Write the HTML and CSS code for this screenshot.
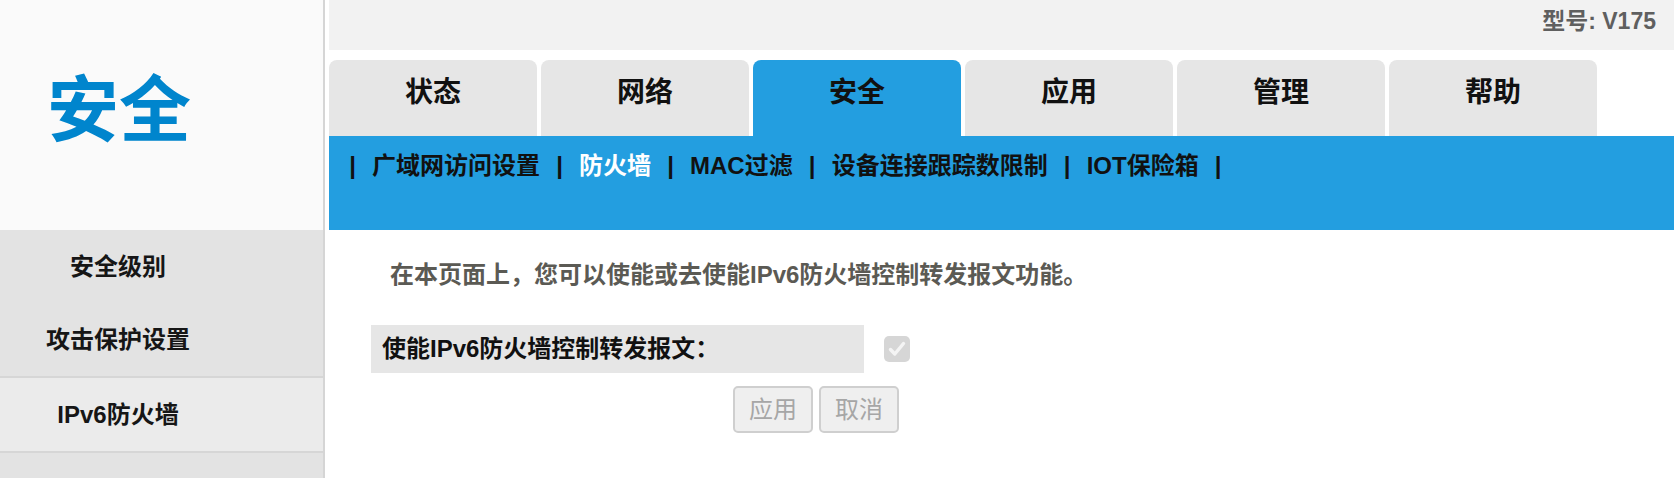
FILE: index.html
```html
<!DOCTYPE html>
<html lang="zh-CN">
<head>
<meta charset="utf-8">
<title>安全 - IPv6防火墙</title>
<link rel="stylesheet" href="styles.css">
</head>
<body>
<div class="page">
  <aside class="sidebar">
    <div class="side-title">安全</div>
    <ul class="side-menu">
      <li class="side-item">安全级别</li>
      <li class="side-item">攻击保护设置</li>
      <li class="side-item active">IPv6防火墙</li>
      <li class="side-item"></li>
    </ul>
  </aside>
  <main class="main">
    <div class="topbar">型号: V175</div>
    <nav class="tabs">
      <div class="tab">状态</div>
      <div class="tab">网络</div>
      <div class="tab active">安全</div>
      <div class="tab">应用</div>
      <div class="tab">管理</div>
      <div class="tab">帮助</div>
    </nav>
    <div class="subnav">
      <span class="pipe">|</span>
      <span class="sublink">广域网访问设置</span>
      <span class="pipe">|</span>
      <span class="sublink current">防火墙</span>
      <span class="pipe">|</span>
      <span class="sublink">MAC过滤</span>
      <span class="pipe">|</span>
      <span class="sublink">设备连接跟踪数限制</span>
      <span class="pipe">|</span>
      <span class="sublink">IOT保险箱</span>
      <span class="pipe">|</span>
    </div>
    <section class="content">
      <p class="desc">在本页面上，您可以使能或去使能IPv6防火墙控制转发报文功能。</p>
      <div class="form-row">
        <div class="form-label">使能IPv6防火墙控制转发报文：</div>
        <div class="checkbox">
          <svg width="26" height="26" viewBox="0 0 26 26"><path d="M6.5 13.5 L10.8 18 L19.5 7.5" fill="none" stroke="#f4f4f4" stroke-width="3.4" stroke-linecap="round" stroke-linejoin="round"/></svg>
        </div>
      </div>
      <div class="buttons">
        <button class="btn" disabled>应用</button>
        <button class="btn" disabled>取消</button>
      </div>
    </section>
  </main>
</div>
</body>
</html>
```

FILE: styles.css
```css
* { box-sizing: border-box; }

html, body {
  margin: 0;
  padding: 0;
  background: #ffffff;
  font-family: "Liberation Sans", "Noto Sans CJK SC", sans-serif;
}

.page {
  display: flex;
  width: 1674px;
  height: 478px;
  overflow: hidden;
}

.sidebar {
  width: 325px;
  flex: 0 0 325px;
  border-right: 2px solid #d5d5d5;
  display: flex;
  flex-direction: column;
  background: #e3e3e3;
  overflow: hidden;
}

.side-title {
  flex: none;
  height: 230px;
  background: #fafafa;
  padding-top: 70px;
  padding-right: 85px;
  text-align: center;
  font-size: 72px;
  line-height: 80px;
  font-weight: bold;
  color: #0085cd;
}

.side-menu {
  flex: none;
  list-style: none;
  margin: 0;
  padding: 0;
}

.side-item {
  height: 73px;
  line-height: 73px;
  padding-right: 87px;
  text-align: center;
  font-size: 24px;
  font-weight: bold;
  color: #161616;
}

.side-item.active {
  height: 77px;
  line-height: 73px;
  background: #ebebeb;
  border-top: 2px solid #d6d6d6;
  border-bottom: 2px solid #d6d6d6;
}

.main {
  flex: 1;
  margin-left: 4px;
  display: flex;
  flex-direction: column;
}

.topbar {
  flex: none;
  height: 50px;
  background: #f2f2f2;
  text-align: right;
  padding: 6px 18px 0 0;
  font-size: 23px;
  line-height: 30px;
  font-weight: bold;
  color: #5f5f5f;
}

.tabs {
  flex: none;
  display: flex;
  gap: 4px;
  margin-top: 10px;
  height: 76px;
}

.tab {
  width: 208px;
  height: 76px;
  background: #e6e6e6;
  border-radius: 8px 8px 0 0;
  text-align: center;
  padding-top: 15px;
  font-size: 28px;
  line-height: 36px;
  font-weight: bold;
  color: #111111;
}

.tab.active {
  background: #239ee0;
}

.subnav {
  flex: none;
  height: 94px;
  background: #239ee0;
  display: flex;
  align-items: flex-start;
  gap: 16px;
  padding: 12px 0 0 20px;
  font-size: 24px;
  line-height: 36px;
  font-weight: bold;
  color: #111111;
}

.pipe {
  display: inline-block;
  width: 7px;
  text-align: center;
}

.sublink.current {
  color: #ffffff;
}

.content {
  padding: 30px 0 0 42px;
}

.desc {
  margin: 0 0 35px 0;
  padding-left: 19px;
  font-size: 24px;
  line-height: 30px;
  font-weight: bold;
  color: #5b5a54;
}

.form-row {
  display: flex;
  align-items: center;
  gap: 20px;
}

.form-label {
  width: 493px;
  height: 48px;
  background: #e6e6e6;
  padding-left: 11px;
  font-size: 24px;
  line-height: 48px;
  font-weight: bold;
  color: #111111;
}

.checkbox {
  width: 26px;
  height: 26px;
  border-radius: 5px;
  background: #d6d6d6;
  display: flex;
}

.buttons {
  display: flex;
  gap: 6px;
  margin-top: 13px;
  padding-left: 362px;
}

.btn {
  width: 80px;
  height: 47px;
  border: 2px solid #cfcfcf;
  border-radius: 5px;
  background: #efefef;
  color: #a6a6a6;
  font-family: "Liberation Sans", "Noto Sans CJK SC", sans-serif;
  font-size: 24px;
  line-height: 41px;
  padding: 0;
}
```
